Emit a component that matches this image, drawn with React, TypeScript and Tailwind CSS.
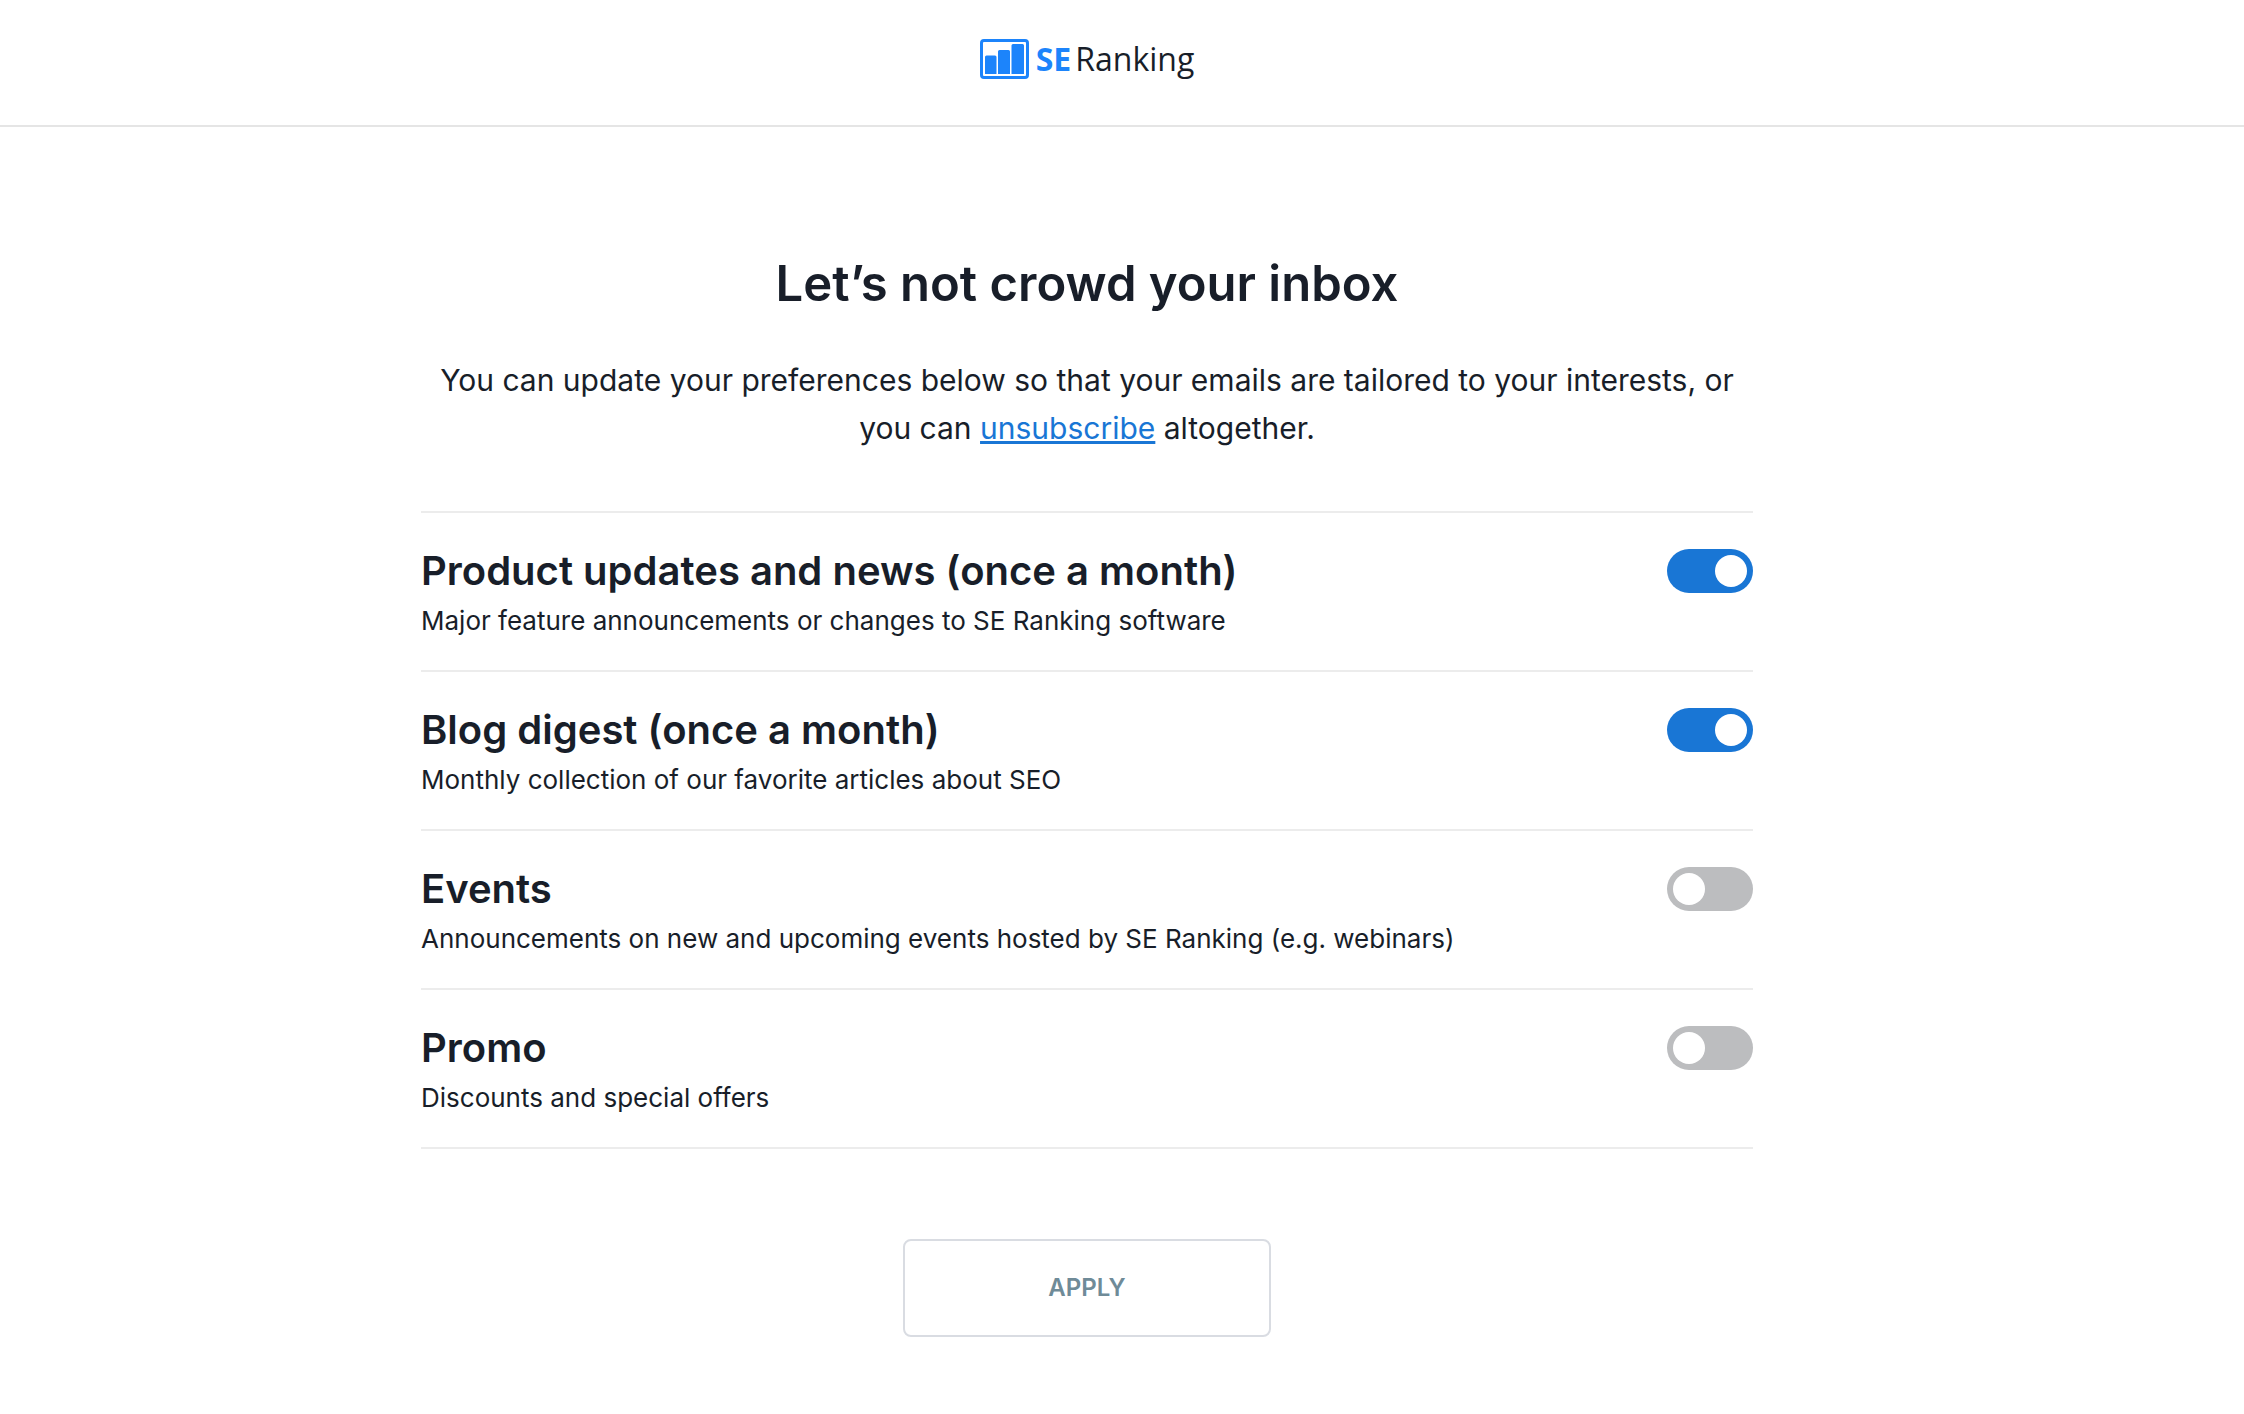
import { useState } from "react";

const preferences = [
  {
    id: "product",
    title: "Product updates and news (once a month)",
    description: "Major feature announcements or changes to SE Ranking software",
    enabled: true,
  },
  {
    id: "blog",
    title: "Blog digest (once a month)",
    description: "Monthly collection of our favorite articles about SEO",
    enabled: true,
  },
  {
    id: "events",
    title: "Events",
    description:
      "Announcements on new and upcoming events hosted by SE Ranking (e.g. webinars)",
    enabled: false,
  },
  {
    id: "promo",
    title: "Promo",
    description: "Discounts and special offers",
    enabled: false,
  },
];

function Logo() {
  return (
    <a href="#" className="flex items-center gap-[7px] font-['Open_Sans',sans-serif] text-[32px] leading-10">
      <svg width="49" height="40" viewBox="0 0 49 40" aria-hidden="true">
        <rect x="1.5" y="1.5" width="46" height="37" rx="2.5" fill="#fff" stroke="#1c84fb" strokeWidth="3" />
        <path
          fill="#1c84fb"
          d="M5 35V18q0-1.500 1.500-1.500h8.500q1.500 0 1.500 1.500v17zM18 35V12.500q0-1.500 1.500-1.500h9q1.500 0 1.500 1.500V35zM31.500 35V6.500q0-1.500 1.500-1.500h9.500q1.500 0 1.500 1.500V35z"
        />
      </svg>
      <span className="flex gap-1">
        <span className="font-bold text-[#1c84fb]">SE</span>
        <span>Ranking</span>
      </span>
    </a>
  );
}

function App() {
  const [items, setItems] = useState(preferences);

  const toggle = (id: string) =>
    setItems(items.map((p) => (p.id === id ? { ...p, enabled: !p.enabled } : p)));

  return (
    <div className="min-h-screen bg-white font-[Inter,sans-serif] text-[#181e29]">
      <header className="flex justify-center border-b-2 border-[#e5e5e5] pt-[39px] pr-[70px] pb-[46px]">
        <Logo />
      </header>

      <main className="pt-[121px] pr-[70px]">
        <form className="mx-auto max-w-[1332px]" onSubmit={(e) => e.preventDefault()}>
          {/* Intro */}
          <h1 className="text-center text-[49px] leading-[72px] font-semibold">
            Let’s not crowd your inbox
          </h1>
          <p className="mt-9 text-center text-[30px] leading-[48px]">
            You can update your preferences below so that your emails are tailored to your interests, or
            <br />
            you can{" "}
            <a href="#" className="text-[#1976d5] underline">
              unsubscribe
            </a>{" "}
            altogether.
          </p>

          {/* Email categories */}
          <ul className="mt-[59px] border-t-2 border-[#ececec]">
            {items.map((p) => (
              <li
                key={p.id}
                className="flex items-start justify-between border-b-2 border-[#ececec] pt-7 pb-[29px]"
              >
                <label htmlFor={p.id}>
                  <span className="block text-[40px] leading-[60px] font-semibold">{p.title}</span>
                  <span className="block text-[26px] leading-[40px]">{p.description}</span>
                </label>
                <input
                  id={p.id}
                  type="checkbox"
                  role="switch"
                  checked={p.enabled}
                  onChange={() => toggle(p.id)}
                  className="mt-2 flex h-11 w-[86px] shrink-0 cursor-pointer appearance-none rounded-full bg-[#bcbdbf] p-1.5 before:size-8 before:rounded-full before:bg-white checked:justify-end checked:bg-[#1976d5]"
                />
              </li>
            ))}
          </ul>

          <button
            type="submit"
            className="mx-auto mt-[90px] block h-[98px] w-[368px] rounded-lg border-2 border-[#d9dce2] text-[24px] font-semibold text-[#6f8b98]"
          >
            APPLY
          </button>
        </form>
      </main>
    </div>
  );
}

export default App;
